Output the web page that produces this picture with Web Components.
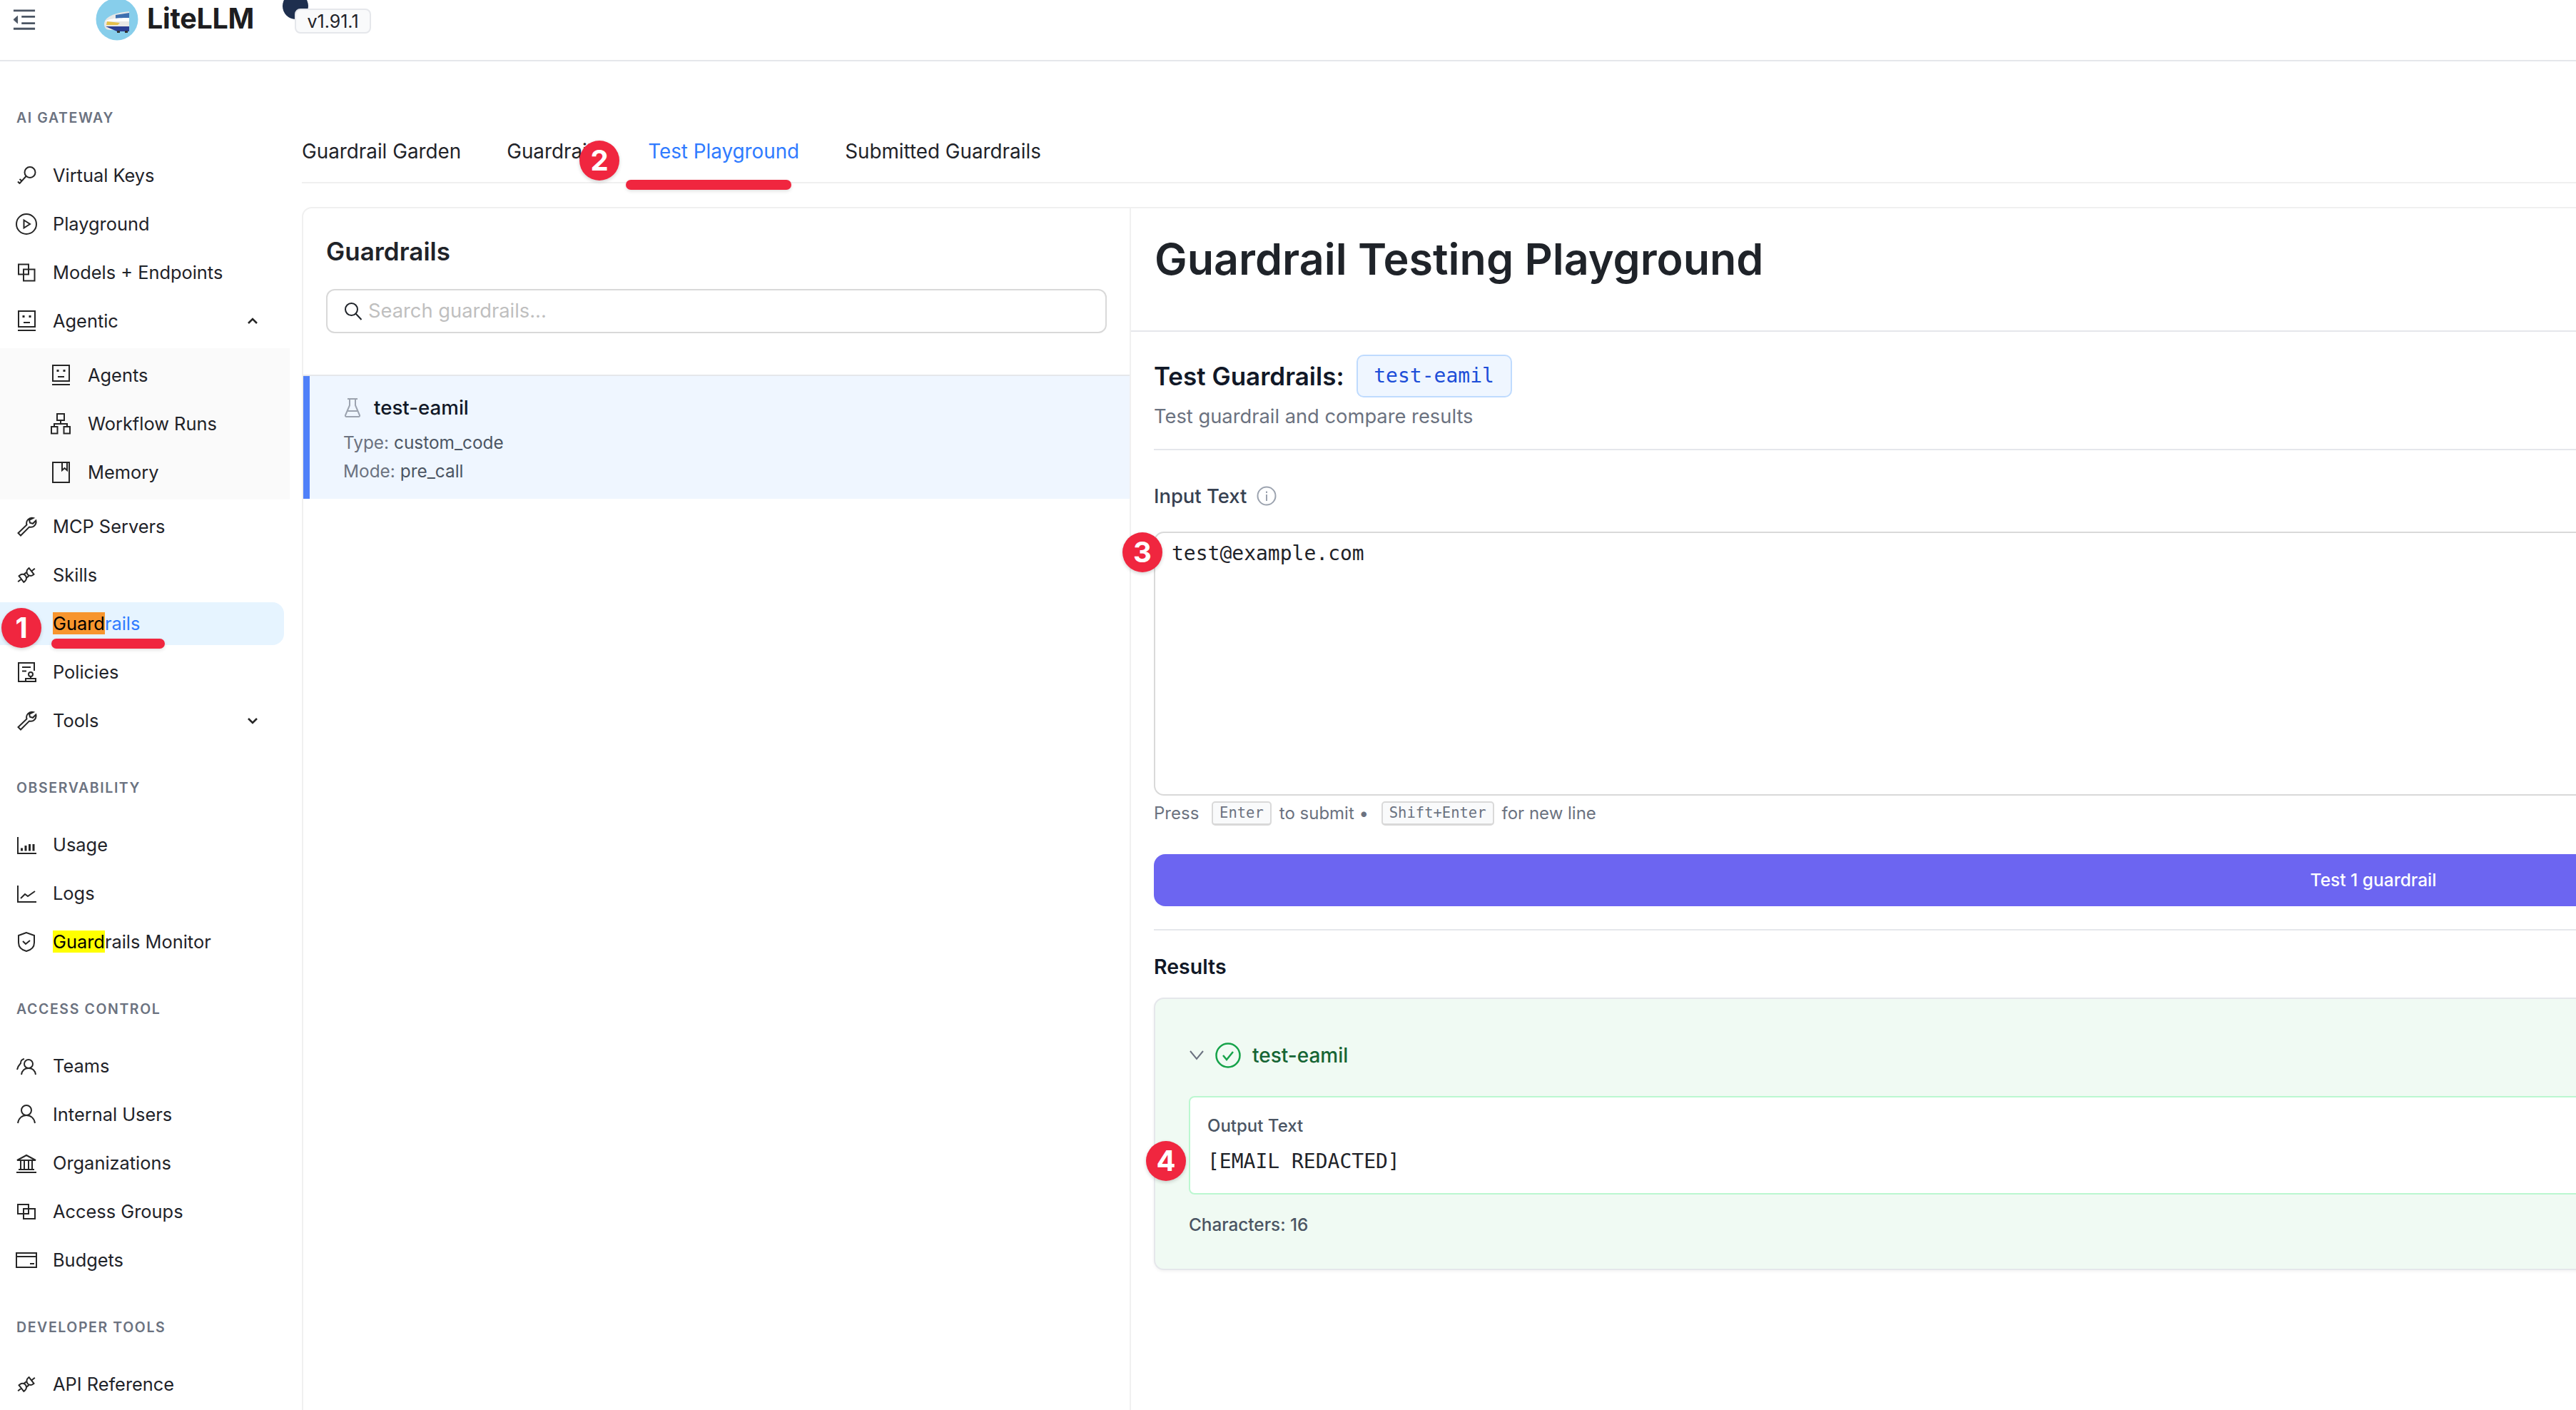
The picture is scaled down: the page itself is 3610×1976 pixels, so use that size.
<!DOCTYPE html>
<html lang="en">
<head>
<meta charset="utf-8">
<title>LiteLLM Guardrail Playground</title>
<style>
  html, body { margin: 0; height: 100%; overflow: hidden; background: #fff; }
  body { position: relative; width: 3610px; height: 1976px; font-family: Inter, "Liberation Sans", sans-serif; color: #1f2329; }
  .page { display: flex; flex-direction: column; height: 1976px; overflow: hidden; }
  .below { display: flex; flex: 1; min-height: 0; }
  mark { color: #000; padding: 0; }
  mark.o { background: #f7952d; }
  mark.y { background: #ffff00; }
</style>
</head>
<body>
<div class="page">
  <lite-header version="v1.91.1"></lite-header>
  <div class="below">
    <side-nav>
      <nav-label>AI GATEWAY</nav-label>
      <nav-item icon="key">Virtual Keys</nav-item>
      <nav-item icon="play">Playground</nav-item>
      <nav-item icon="block">Models + Endpoints</nav-item>
      <nav-item icon="robot" caret="up">Agentic</nav-item>
      <nav-group>
        <nav-item sub icon="robot">Agents</nav-item>
        <nav-item sub icon="flow">Workflow Runs</nav-item>
        <nav-item sub icon="book">Memory</nav-item>
      </nav-group>
      <nav-item icon="tool">MCP Servers</nav-item>
      <nav-item icon="plug">Skills</nav-item>
      <nav-item icon="none" active><mark class="o">Guard</mark>rails</nav-item>
      <nav-item icon="policy">Policies</nav-item>
      <nav-item icon="tool" caret="down">Tools</nav-item>
      <nav-label>OBSERVABILITY</nav-label>
      <nav-item icon="bars">Usage</nav-item>
      <nav-item icon="line">Logs</nav-item>
      <nav-item icon="shield"><mark class="y">Guard</mark>rails Monitor</nav-item>
      <nav-label>ACCESS CONTROL</nav-label>
      <nav-item icon="team">Teams</nav-item>
      <nav-item icon="user">Internal Users</nav-item>
      <nav-item icon="bank">Organizations</nav-item>
      <nav-item icon="group">Access Groups</nav-item>
      <nav-item icon="wallet">Budgets</nav-item>
      <nav-label>DEVELOPER TOOLS</nav-label>
      <nav-item icon="plug">API Reference</nav-item>
    </side-nav>
    <guardrail-main>
      <tab-bar>
        <tab-item>Guardrail Garden</tab-item>
        <tab-item>Guardrails</tab-item>
        <tab-item active>Test Playground</tab-item>
        <tab-item>Submitted Guardrails</tab-item>
      </tab-bar>
      <play-card>
        <guardrail-list slot="list">
          <guardrail-item name="test-eamil" type="custom_code" mode="pre_call"></guardrail-item>
        </guardrail-list>
        <test-panel slot="panel" name="test-eamil"></test-panel>
      </play-card>
    </guardrail-main>
  </div>
</div>

<!-- red annotations drawn over the screenshot -->
<note-bar x="72" y="895" w="159"></note-bar>
<note-bar x="877" y="252" w="232"></note-bar>
<note-badge x="30" y="880">1</note-badge>
<note-badge x="840" y="225">2</note-badge>
<note-badge x="1601" y="774">3</note-badge>
<note-badge x="1634" y="1627">4</note-badge>

<script>
// Icons are drawn 1 unit = 1px in a 32x32 box, stroke inherited from the svg.
const ICONS = {
  none: ``,
  key: `<circle cx="21" cy="11.5" r="7.5"/><path d="M15.5 17 6 27.5M9.5 23.5 6.5 21M6.5 27 4 24.5"/>`,
  play: `<circle cx="16" cy="16" r="14"/><path d="M12.5 10.5 21 16l-8.5 5.5z"/>`,
  block: `<rect x="5" y="4.500" width="14" height="14"/><rect x="12" y="11.5" width="15.500" height="16"/>`,
  robot: `<rect x="5" y="2" width="23" height="22"/><path d="M4 29h25M12 18h9" /><path d="M10.500 9.500h3M19.500 9.500h3" stroke-width="3"/>`,
  flow: `<rect x="11" y="2" width="10" height="9"/><rect x="3" y="20" width="8.500" height="9.500"/><rect x="20.500" y="20" width="8.500" height="9.500"/><path d="M16 11v5M7 20v-4h18v4"/>`,
  book: `<path d="M5 2h23v28H5zM18 2v11l3.500-3 3.500 3V2"/>`,
  tool: `<path d="M25.500 4a7.500 7.500 0 0 0-9 9.500L4.500 25l3.500 3.500 12-12a7.500 7.500 0 0 0 9.300-9l-4.300 4.300-4-1-1-4z"/>`,
  plug: `<g transform="rotate(-38 16 16)"><path d="M1 16h6M7 10.500h2a5.500 5.500 0 0 1 0 11H7zM14 13h4M14 19h4M25 10.500h-1.500a5.500 5.500 0 0 0 0 11H25zM25 16h6"/></g>`,
  policy: `<path d="M27 14V3H5v26h9M10 9h12M10 14.500h6"/><circle cx="22" cy="19" r="3"/><path d="M22 22v3M15 25h14v4H15z"/>`,
  bars: `<path d="M4 5v23h26"/><path d="M9.500 20.500v4M15 17v7.500M20.500 15v9.500M26 15v9.500" stroke-width="3"/>`,
  line: `<path d="M4 5v23h26M8 23l6-6 4 3 10-7"/>`,
  shield: `<path d="M16 3 5 7v10c0 6 3 10 11 12 8-2 11-6 11-12V7z"/><path d="m11 15 4 4 6-5"/>`,
  team: `<circle cx="19" cy="13" r="6"/><path d="M9 28c1-6 5-9 10-9s9 3 10 9M13 6a5.500 5.500 0 0 0-5 6c-2 2-4 5-5 9"/>`,
  user: `<circle cx="16" cy="10" r="7"/><path d="M4 28c1-7 6-11 12-11s11 4 12 11"/>`,
  bank: `<path d="M3 12 16 5l13 7zM2 29h28M5 25h22M8 13v12M13 13v12M19 13v12M24 13v12"/>`,
  group: `<rect x="4" y="6" width="15" height="13"/><rect x="12" y="12" width="16" height="14"/>`,
  wallet: `<rect x="2" y="6" width="28" height="20"/><path d="M2 11h28M21 21h6"/>`,
  menu: `<path d="M1 2h32M13 11h20M13 21h20M1 29h32" stroke-width="3"/><path d="M7 10 1 15.500 7 21z" fill="currentColor"/>`,
};

function icon(name, size = 32) {
  return `<svg width="${size}" height="${size}" viewBox="0 0 32 32" fill="none" stroke="currentColor" stroke-width="2" stroke-linejoin="miter">${ICONS[name] || ""}</svg>`;
}

class LiteHeader extends HTMLElement {
  constructor() {
    super();
    this.attachShadow({ mode: "open" });
    this.shadowRoot.innerHTML = `
<style>
:host { display: flex; flex: none; height: 86px; box-sizing: border-box; border-bottom: 2px solid #e5e7eb; position: relative; overflow: hidden; }
.menu { margin: 12px 0 0 18px; color: #4b5563; flex: none; }
.logo { margin: -3px 0 0 84px; flex: none; }
.name { margin: 0 0 0 12px; font: 700 39.500px/52px Inter, sans-serif; letter-spacing: -.3px; color: #1d1d20; height: 52px; }
.dot { position: absolute; left: 396px; top: -10px; width: 36px; height: 37px; border-radius: 50%; background: #1e2f4e; }
.ver { position: absolute; left: 413px; top: 12px; height: 35px; width: 107px; box-sizing: border-box; border: 2px solid #e5e7eb; border-radius: 8px; background: #f9fafb; font: 400 25px/33px Inter, sans-serif; text-align: center; color: #1f2329; }
</style>
<svg class="menu" width="32" height="32" viewBox="0 0 34 32" fill="none" stroke="currentColor">${ICONS.menu}</svg>
<svg class="logo" width="60" height="60" viewBox="0 0 60 60">
  <circle cx="30" cy="30" r="29.500" fill="#87ceeb"/>
  <path d="M12 36c1-9 13-15 35-17v26H20c-6 0-8-4-8-9z" fill="#e8e8e6"/>
  <path d="M28 24l19-3v7l-19 2z" fill="#3d6fb0"/>
  <path d="M13 33c5-3 12-5 34-5v5H14z" fill="#fff"/>
  <path d="M14 40h33v7H30z" fill="#2b3f93"/>
  <path d="M16 33l18 2-3 3H15z" fill="#e6c04a"/>
  <path d="M30 46h4v3h-4zM41 46h4v3h-4z" fill="#333"/>
</svg>
<div class="name">LiteLLM</div>
<div class="dot"></div>
<div class="ver"></div>`;
  }
  connectedCallback() {
    this.shadowRoot.querySelector(".ver").textContent = this.getAttribute("version");
  }
}

class SideNav extends HTMLElement {
  constructor() {
    super();
    this.attachShadow({ mode: "open" }).innerHTML = `
<style>
:host { display: block; flex: none; width: 423px; box-sizing: border-box; padding-top: 66px; overflow: hidden; }
</style>
<slot></slot>`;
  }
}

class NavLabel extends HTMLElement {
  constructor() {
    super();
    this.attachShadow({ mode: "open" }).innerHTML = `
<style>
:host { display: block; height: 24px; margin: 50.500px 0 39.500px 23px; font: 600 19.500px/26px Inter, sans-serif; letter-spacing: 1.600px; color: #6b7280; white-space: nowrap; }
:host(:first-child) { margin-top: 0; margin-bottom: 40px; }
</style>
<slot></slot>`;
  }
}

class NavGroup extends HTMLElement {
  constructor() {
    super();
    this.attachShadow({ mode: "open" }).innerHTML = `
<style>
:host { display: flow-root; width: 406px; background: #fafafa; padding-top: 8px; margin-bottom: 8px; }
</style>
<slot></slot>`;
  }
}

class NavItem extends HTMLElement {
  constructor() {
    super();
    this.attachShadow({ mode: "open" });
  }
  connectedCallback() {
    const caret = this.getAttribute("caret");
    const chev = caret === "up" ? "M2 9 8 3l6 6" : "M2 3l6 6 6-6";
    this.shadowRoot.innerHTML = `
<style>
:host { display: flex; align-items: center; width: 398px; height: 60px; margin-bottom: 8px; box-sizing: border-box; padding-left: 21px; font: 400 25.400px/30px Inter, sans-serif; color: #1f2329; white-space: nowrap; }
:host([sub]) { padding-left: 69px; }
:host([active]) { background: #e6f4ff; color: #2f7bff; border-radius: 0 16px 16px 0; }
.ic { flex: none; display: flex; width: 32px; height: 32px; margin-right: 21px; color: #262626; }
:host([sub]) .ic { margin-right: 22px; }
.txt { flex: 1; }
.caret { flex: none; margin: 0 36px 0 0; color: #262626; }
</style>
<span class="ic">${icon(this.getAttribute("icon"))}</span>
<span class="txt"><slot></slot></span>
${caret ? `<svg class="caret" width="16" height="12" viewBox="0 0 16 12" fill="none" stroke="currentColor" stroke-width="2.600"><path d="${chev}"/></svg>` : ""}`;
  }
}

class GuardrailMain extends HTMLElement {
  constructor() {
    super();
    this.attachShadow({ mode: "open" }).innerHTML = `
<style>
:host { display: block; flex: 1; min-width: 0; padding-top: 84px; overflow: hidden; }
</style>
<slot></slot>`;
  }
}

class TabBar extends HTMLElement {
  constructor() {
    super();
    this.attachShadow({ mode: "open" }).innerHTML = `
<style>
:host { display: flex; gap: 64px; height: 87px; box-sizing: border-box; border-bottom: 2px solid #f0f0f0; padding-top: 24px; }
</style>
<slot></slot>`;
  }
}

class TabItem extends HTMLElement {
  constructor() {
    super();
    this.attachShadow({ mode: "open" }).innerHTML = `
<style>
:host { display: block; font: 400 27.800px/36px Inter, sans-serif; color: #1f2329; white-space: nowrap; }
:host([active]) { color: #2f7bff; }
</style>
<slot></slot>`;
  }
}

class PlayCard extends HTMLElement {
  constructor() {
    super();
    this.attachShadow({ mode: "open" }).innerHTML = `
<style>
:host { display: flex; width: 4700px; height: 1700px; margin-top: 33px; box-sizing: border-box; border: 2px solid #f0f0f0; border-radius: 14px 0 0 0; }
.l { flex: none; width: 1160px; box-sizing: border-box; border-right: 2px solid #f0f0f0; }
.r { flex: 1; min-width: 0; }
</style>
<div class="l"><slot name="list"></slot></div>
<div class="r"><slot name="panel"></slot></div>`;
  }
}

class GuardrailList extends HTMLElement {
  constructor() {
    super();
    this.attachShadow({ mode: "open" }).innerHTML = `
<style>
:host { display: block; }
.head { padding: 40px 32px 58px 32px; border-bottom: 2px solid #e5e7eb; }
h2 { margin: 0 0 33px; font: 600 35px/40px Inter, sans-serif; color: #1f2329; }
.search { display: flex; align-items: center; height: 62px; box-sizing: border-box; border: 2px solid #d9d9d9; border-radius: 12px; padding-left: 23px; }
.search svg { flex: none; margin-right: 8px; }
input { flex: 1; border: 0; outline: 0; background: none; font: 400 27.300px/32px Inter, sans-serif; color: #1f2329; padding: 0; }
input::placeholder { color: #bfbfbf; opacity: 1; }
</style>
<div class="head">
  <h2>Guardrails</h2>
  <div class="search">
    <svg width="26" height="26" viewBox="0 0 26 26" fill="none" stroke="#1f2329" stroke-width="2"><circle cx="10.500" cy="10.500" r="8.500"/><path d="m16.500 16.500 8 8.500"/></svg>
    <input placeholder="Search guardrails...">
  </div>
</div>
<slot></slot>`;
  }
}

class GuardrailItem extends HTMLElement {
  constructor() {
    super();
    this.attachShadow({ mode: "open" });
  }
  connectedCallback() {
    const a = (k) => this.getAttribute(k);
    this.shadowRoot.innerHTML = `
<style>
:host { display: block; height: 172px; box-sizing: border-box; background: #eff6ff; border-left: 9px solid #4f80f9; padding: 26px 0 0 47px; }
.row { display: flex; align-items: center; height: 36px; font: 500 27.700px/36px Inter, sans-serif; color: #111827; }
.row svg { flex: none; margin-right: 17px; }
.meta { margin-top: 11px; height: 40px; font: 400 24.400px/40px Inter, sans-serif; color: #6b7280; }
.meta + .meta { margin-top: 0; }
.meta b { font-weight: 400; color: #4b5563; }
</style>
<div class="row">
  <svg width="26" height="28" viewBox="0 0 26 28" fill="none" stroke="#9ca3af" stroke-width="2"><path d="M6 2h14M9 2v9L3 25c-.5 1 .5 2 1.500 2h17c1 0 2-1 1.500-2L17 11V2M6 19h14"/></svg>
  ${a("name")}
</div>
<div class="meta">Type: <b>${a("type")}</b></div>
<div class="meta">Mode: <b>${a("mode")}</b></div>`;
  }
}

class TestPanel extends HTMLElement {
  constructor() {
    super();
    this.attachShadow({ mode: "open" });
  }
  connectedCallback() {
    const name = this.getAttribute("name");
    this.shadowRoot.innerHTML = `
<style>
:host { display: block; }
.title { height: 173px; box-sizing: border-box; border-bottom: 2px solid #e5e7eb; padding: 33px 0 0 33px; }
h1 { margin: 0; font: 600 61px/76px Inter, sans-serif; color: #1f2329; white-space: nowrap; }
.body { padding: 32px 0 0 32px; width: 3418px; }
.sel { display: flex; align-items: center; gap: 17px; height: 60px; }
.sel strong { font: 600 35px/60px Inter, sans-serif; color: #111827; }
.chip { height: 60px; width: 218px; box-sizing: border-box; border: 2px solid #bfdbfe; border-radius: 10px; background: #eff6ff; font: 400 28px/56px "DejaVu Sans Mono", monospace; color: #1d4ed8; text-align: center; }
.desc { font: 400 27.300px/34px Inter, sans-serif; color: #6b7280; margin-top: 10px; }
hr { border: 0; height: 2px; background: #e5e7eb; margin: 0; }
.d1 { margin-top: 28px; }
.label { display: flex; align-items: center; gap: 14px; height: 34px; margin-top: 47px; font: 500 27.400px/34px Inter, sans-serif; color: #374151; }
textarea { display: block; box-sizing: border-box; width: 100%; height: 370px; margin: 33px 0 0; padding: 12px 23px; border: 2px solid #d9d9d9; border-radius: 14px; font: 400 28px/34px "DejaVu Sans Mono", monospace; color: #1f2329; outline: 0; resize: none; background: #fff; }
.hint { display: flex; align-items: center; height: 36px; margin-top: 7px; font: 400 24px/36px Inter, sans-serif; color: #6b7280; white-space: pre; }
kbd { height: 34px; box-sizing: border-box; border: 2px solid #d9d9d9; border-bottom-width: 3px; border-radius: 5px; background: #f9fafb; padding: 0 9px; margin: 0 11px 0 11px; font: 400 20.500px/29px "DejaVu Sans Mono", monospace; color: #6b7280; }
button { display: block; width: 100%; height: 73px; margin-top: 39px; border: 0; border-radius: 16px; background: #6c65f1; font: 500 24.500px/73px Inter, sans-serif; color: #fff; padding: 0; }
.d2 { margin-top: 32px; }
h3 { margin: 33px 0 0; font: 600 28.500px/36px Inter, sans-serif; color: #111827; }
.res { box-sizing: border-box; height: 382px; margin-top: 25px; border: 2px solid #e5e7eb; border-radius: 14px; background: #f0faf3; box-shadow: 0 2px 4px rgba(0,0,0,.05); padding: 59px 0 0 47px; }
.res-h { display: flex; align-items: center; height: 40px; font: 500 28px/40px Inter, sans-serif; color: #166534; }
.out { box-sizing: border-box; height: 138px; margin-top: 37px; background: #fff; border: 2px solid #bbf7d0; border-radius: 8px; padding: 25px 0 0 24px; }
.out small { display: block; font: 500 24px/30px Inter, sans-serif; color: #4b5563; }
.out pre { margin: 17px 0 0; font: 400 28px/36px "DejaVu Sans Mono", monospace; color: #1f2329; }
.count { margin-top: 27px; font: 500 24.300px/30px Inter, sans-serif; color: #4b5563; }
</style>
<div class="title"><h1>Guardrail Testing Playground</h1></div>
<div class="body">
  <div class="sel"><strong>Test Guardrails:</strong><span class="chip">${name}</span></div>
  <div class="desc">Test guardrail and compare results</div>
  <hr class="d1">
  <div class="label">Input Text
    <svg width="28" height="28" viewBox="0 0 28 28" fill="none" stroke="#9ca3af" stroke-width="2"><circle cx="14" cy="14" r="12.500"/><path d="M14 12v9M14 7.500v2.500"/></svg>
  </div>
  <textarea>test@example.com</textarea>
  <div class="hint">Press <kbd>Enter</kbd>to submit • <kbd>Shift+Enter</kbd>for new line</div>
  <button>Test 1 guardrail</button>
  <hr class="d2">
  <h3>Results</h3>
  <div class="res">
    <div class="res-h">
      <svg width="22" height="14" viewBox="0 0 22 14" fill="none" stroke="#6b7280" stroke-width="2" style="margin-right:15px"><path d="m2 1 9 11 9-11"/></svg>
      <svg width="36" height="36" viewBox="0 0 36 36" fill="none" stroke="#16a34a" stroke-width="2.500" style="margin-right:16px"><circle cx="18" cy="18" r="16.500"/><path d="m11 18 5 6 9-11"/></svg>
      ${name}
    </div>
    <div class="out">
      <small>Output Text</small>
      <pre>[EMAIL REDACTED]</pre>
    </div>
    <div class="count">Characters: 16</div>
  </div>
</div>`;
  }
}

class NoteBadge extends HTMLElement {
  constructor() {
    super();
    this.attachShadow({ mode: "open" }).innerHTML = `
<style>
:host { position: absolute; width: 56px; height: 56px; margin: -28px 0 0 -28px; border-radius: 50%; background: #f0263f; box-shadow: 0 2px 5px rgba(0,0,0,.18); color: #fff; font: 700 40px/56px Inter, sans-serif; text-align: center; }
</style>
<slot></slot>`;
  }
  connectedCallback() {
    this.style.left = this.getAttribute("x") + "px";
    this.style.top = this.getAttribute("y") + "px";
  }
}

class NoteBar extends HTMLElement {
  constructor() {
    super();
    this.attachShadow({ mode: "open" }).innerHTML = `
<style>
:host { position: absolute; height: 14px; border-radius: 7px; background: #f0263f; box-shadow: 0 2px 5px rgba(0,0,0,.12); }
</style>`;
  }
  connectedCallback() {
    this.style.left = this.getAttribute("x") + "px";
    this.style.top = this.getAttribute("y") + "px";
    this.style.width = this.getAttribute("w") + "px";
  }
}

customElements.define("lite-header", LiteHeader);
customElements.define("side-nav", SideNav);
customElements.define("nav-label", NavLabel);
customElements.define("nav-group", NavGroup);
customElements.define("nav-item", NavItem);
customElements.define("guardrail-main", GuardrailMain);
customElements.define("tab-bar", TabBar);
customElements.define("tab-item", TabItem);
customElements.define("play-card", PlayCard);
customElements.define("guardrail-list", GuardrailList);
customElements.define("guardrail-item", GuardrailItem);
customElements.define("test-panel", TestPanel);
customElements.define("note-badge", NoteBadge);
customElements.define("note-bar", NoteBar);
</script>
</body>
</html>
